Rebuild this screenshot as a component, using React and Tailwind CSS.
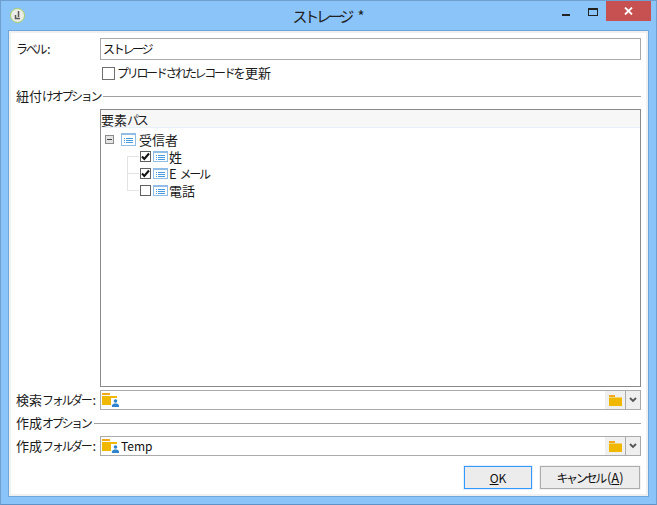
const font = { fontFamily: '"Noto Sans CJK JP","Noto Sans",sans-serif' };

function T({ children, title }) {
  const parts = String(children).split(/([ァ-ヿぁ-ゟー]+)/);
  return (
    <>
      {parts.map((p, i) =>
        i % 2 === 1 ? (
          <span key={i} className={title ? "text-[15px] tracking-[-3.2px] mr-[3px]" : "text-[12px] tracking-[-2.3px] mr-[2px]"}>{p}</span>
        ) : (
          <span key={i}>{p}</span>
        )
      )}
    </>
  );
}

function ListIcon({ small }) {
  const h = small ? 11 : 13;
  const ys = small ? [4, 6, 8] : [5, 7, 9];
  return (
    <svg width="15" height={h} viewBox={`0 0 15 ${h}`} className="shrink-0 block" shapeRendering="crispEdges">
      <rect x="0" y="0" width="15" height={h} fill="#8fbde8" />
      <rect x="1" y="2" width="13" height={h - 3} fill="#fff" />
      {ys.map((y) => (
        <g key={y} fill="#4a9bdf">
          <rect x="3" y={y} width="1" height="1" />
          <rect x="5" y={y} width="7" height="1" />
        </g>
      ))}
    </svg>
  );
}

function Check({ checked }) {
  return (
    <span className="w-[11px] h-[11px] border border-[#5f5f5f] bg-white shrink-0 flex items-center justify-center">
      {checked && (
        <svg width="9" height="9" viewBox="0 0 9 9">
          <path d="M1 4.500L3.300 7L8 1.500" fill="none" stroke="#111" strokeWidth="2" />
        </svg>
      )}
    </span>
  );
}

function Folder() {
  return (
    <svg width="18" height="16" viewBox="0 0 18 16" className="shrink-0">
      <rect x="0" y="1" width="8" height="2" fill="#f2a91c" />
      <rect x="0" y="4" width="15" height="9" fill="#f0b800" />
      <rect x="9" y="6" width="8" height="10" fill="#fff" />
      <g fill="#2f84cc">
        <circle cx="13.500" cy="9" r="1.800" />
        <path d="M10 15v-2l2-1.500h3l2 1.500v2z" />
      </g>
    </svg>
  );
}

function Separator({ label }) {
  return (
    <div className="flex items-center h-4">
      <span className="shrink-0 whitespace-nowrap"><T>{label}</T></span>
      <span className="flex-1 h-px bg-[#a0a0a0] ml-px" />
    </div>
  );
}

function FolderRow({ label, value }) {
  return (
    <div className="flex items-center h-5">
      <span className="w-[84px] shrink-0 whitespace-nowrap"><T>{label}</T></span>
      <div className="flex-1 flex h-5 border border-[#ababab] bg-white items-center border-r-0 pl-px min-w-0">
        <Folder />
        <span className="ml-px flex-1 text-[12px] text-[#111]">{value}</span>
        <span className="w-[20px] h-[18px] bg-[#f0f0f0] flex items-center justify-center">
          <svg width="13" height="11" viewBox="0 0 13 11">
            <rect x="0" y="0" width="6" height="2" fill="#f2a91c" />
            <rect x="0" y="2.500" width="13" height="8.500" fill="#f0b800" />
          </svg>
        </span>
      </div>
      <span className="w-4 h-5 border border-[#ababab] bg-[#efefef] flex items-center justify-center">
        <svg width="8" height="6" viewBox="0 0 8 6">
          <path d="M1 1l3 3 3-3" fill="none" stroke="#555" strokeWidth="1.800" />
        </svg>
      </span>
    </div>
  );
}

function TreeRow({ checked, label, line }) {
  return (
    <div className="flex items-center h-[17px] relative pl-[39px]">
      <span className="absolute left-[26px] top-2 w-3 h-px bg-[#e3e3e3]" />
      {line && <span className="absolute left-[26px] top-[-8px] w-px h-[17px] bg-[#e3e3e3]" />}
      <Check checked={checked} />
      <span className="ml-[2px] flex"><ListIcon small /></span>
      <span className="ml-px whitespace-nowrap"><T>{label}</T></span>
    </div>
  );
}

export default function App() {
  return (
    <div style={font} className="w-[657px] h-[505px] bg-[#8ac4f9] border border-[#6f9fd0] border-b-[#5f93c8] flex flex-col text-[13px] leading-4 text-[#1a1a1a] overflow-hidden">
      <div className="h-[29px] shrink-0 flex items-start relative">
        <div className="w-[15px] h-[15px] mt-[7px] ml-[9px] rounded-full bg-[#ecece6] border border-[#a6cf62] flex items-center justify-center">
          <svg width="7" height="9" viewBox="0 0 7 9">
            <path d="M4.500 0v6M1.500 4v3.500h4.500" fill="none" stroke="#5a5a5a" strokeWidth="1.500" />
          </svg>
        </div>
        <div className="flex-1 text-center text-[15px] leading-[30px] text-[#222] pr-[24px]"><T title>ストレージ *</T></div>
        <div className="absolute right-[5px] top-0 flex items-start">
          <span className="w-[8px] h-[2px] bg-[#222] mt-[13px] mr-[18px]" />
          <span className="w-[10px] h-[8px] border border-[#222] border-t-2 mt-[7px] mr-[8px]" />
          <span className="w-[45px] h-5 bg-[#c75050] flex items-center justify-center">
            <svg width="9" height="8" viewBox="0 0 9 8">
              <path d="M1 0.500l7 7M8 0.500l-7 7" stroke="#fff" strokeWidth="1.800" />
            </svg>
          </span>
        </div>
      </div>
      <div className="flex-1 mx-[7px] mb-[7px] border border-[#6fa6dc] bg-white min-h-0">
        <div className="h-full border-2 border-[#f0f0f0] bg-white px-[5px] pt-[5px] flex flex-col">
          <div className="flex items-center h-[22px]">
            <span className="w-[84px] shrink-0"><T>ラベル:</T></span>
            <div className="flex-1 h-[22px] border border-[#ababab] bg-white px-[2px] flex items-center text-[#111]"><T>ストレージ</T></div>
          </div>
          <div className="flex items-center h-[14px] mt-[6px] pl-[86px]">
            <span className="w-[13px] h-[13px] border border-[#6f6f6f] bg-white shrink-0" />
            <span className="ml-[2px] whitespace-nowrap"><T>プリロードされたレコードを更新</T></span>
          </div>
          <div className="mt-[8px]">
            <Separator label="紐付けオプション" />
          </div>
          <div className="ml-[84px] mt-[5px] h-[278px] border border-[#8a8a8a] bg-white flex flex-col">
            <div className="h-[18px] shrink-0 bg-[#f7f7f7] border-b border-[#e5f0fa] flex items-start pt-[2px]"><T>要素パス</T></div>
            <div className="pt-[3px]">
              <div className="flex items-center h-[17px] pl-[4px] relative">
                <span className="w-[9px] h-[9px] border border-[#8a8a8a] bg-[#e4e4e4] flex items-center justify-center">
                  <span className="w-[5px] h-px bg-[#444]" />
                </span>
                <span className="ml-[7px] flex"><ListIcon /></span>
                <span className="ml-[3px]"><T>受信者</T></span>
              </div>
              <TreeRow checked label="姓" />
              <TreeRow checked label="E メール" line />
              <TreeRow label="電話" line />
            </div>
          </div>
          <div className="mt-[3px]">
            <FolderRow label="検索フォルダー:" value="" />
          </div>
          <div className="mt-[5px]">
            <Separator label="作成オプション" />
          </div>
          <div className="mt-[5px]">
            <FolderRow label="作成フォルダー:" value="Temp" />
          </div>
          <div className="flex justify-end gap-2 mt-[10px] mr-px">
            <button className="w-[68px] h-[23px] border border-[#3399ff] shadow-[0_0_0_1px_#e3effb] bg-[#ececec] text-[12px] text-[#111]"><span className="underline">O</span>K</button>
            <button className="w-[100px] h-[23px] border border-[#acacac] shadow-[0_0_0_1px_#f2f2f2] bg-[#ececec] text-[#111]"><T>キャンセル</T>(<span className="underline">A</span>)</button>
          </div>
        </div>
      </div>
    </div>
  );
}
